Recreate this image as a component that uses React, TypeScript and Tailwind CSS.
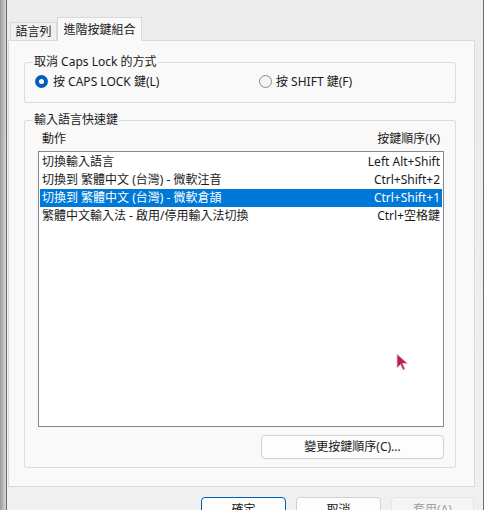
import React from "react";

const font = { fontFamily: '"Noto Sans", "Noto Sans CJK TC", sans-serif' };

function Radio({ checked }: { checked: boolean }) {
  return checked ? (
    <span className="w-[13px] h-[13px] rounded-full bg-[#005fb8] flex items-center justify-center shrink-0">
      <span className="w-[5px] h-[5px] rounded-full bg-white" />
    </span>
  ) : (
    <span className="w-[13px] h-[13px] rounded-full border border-[#8a8a8a] bg-[#f5f5f5] shrink-0" />
  );
}

const rows = [
  ["切換輸入語言", "Left Alt+Shift"],
  ["切換到 繁體中文 (台灣) - 微軟注音", "Ctrl+Shift+2"],
  ["切換到 繁體中文 (台灣) - 微軟倉頡", "Ctrl+Shift+1"],
  ["繁體中文輸入法 - 啟用/停用輸入法切換", "Ctrl+空格鍵"],
];

export default function App() {
  return (
    <div
      className="w-[484px] h-[510px] bg-[#f0f0f0] relative overflow-hidden flex text-[12px] text-[#1a1a1a]"
      style={font}
    >
      <div className="w-[7px] h-full shrink-0 bg-gradient-to-r from-[#9a9a9a] to-[#d8d8d8] border-r border-[#6a6a6a]" />
      <div className="flex-1 flex flex-col bg-gradient-to-b from-[#ececec] to-[#f0f0f0]">
        {/* tabs */}
        <div className="flex items-end pl-[3px] mt-[17px] h-[23px] shrink-0 relative z-10">
          <div className="w-[47px] h-[18px] border border-b-0 border-[#d9d9d9] bg-[#f0f0f0] flex items-center justify-center leading-none">
            語言列
          </div>
          <div className="w-[85px] h-[24px] border border-b-0 border-[#d9d9d9] bg-[#f9f9f9] flex items-start justify-center pt-[4px] leading-[16px] -mb-[1px]">
            進階按鍵組合
          </div>
        </div>
        {/* panel */}
        <div className="ml-[1px] w-[467px] h-[447px] shrink-0 border border-[#dadada] bg-[#f9f9f9] flex flex-col pl-[15px]">
          <fieldset className="mt-[13px] w-[432px] h-[49px] shrink-0 border border-[#dcdcdc] rounded-[2px] px-[10px]">
            <legend className="px-[1px] ml-[-2px] leading-[16px]">取消 Caps Lock 的方式</legend>
            <div className="flex items-center h-[21px] mt-[1px]">
              <div className="flex items-center gap-[5px] w-[224px]">
                <Radio checked />
                <span>按 CAPS LOCK 鍵(L)</span>
              </div>
              <div className="flex items-center gap-[4px]">
                <Radio checked={false} />
                <span>按 SHIFT 鍵(F)</span>
              </div>
            </div>
          </fieldset>
          <fieldset className="mt-[9px] w-[432px] h-[356px] shrink-0 border border-[#dcdcdc] rounded-[2px] pl-[13px] pr-[11px]">
            <legend className="px-[1px] ml-[-5px] leading-[16px]">輸入語言快速鍵</legend>
            <div className="flex justify-between h-[20px] items-center px-[4px] mt-[1px]">
              <span>動作</span>
              <span>按鍵順序(K)</span>
            </div>
            <div className="mt-[2px] h-[276px] border border-[#828790] bg-white p-[1px] pt-[1px]">
              {rows.map(([a, k], i) => (
                <div
                  key={i}
                  className={
                    "flex justify-between items-center h-[18px] px-[2px] " +
                    (i === 2 ? "bg-[#0078d7] text-white" : "")
                  }
                >
                  <span>{a}</span>
                  <span>{k}</span>
                </div>
              ))}
            </div>
            <div className="flex justify-end mt-[8px]">
              <button className="w-[183px] h-[24px] rounded-[4px] border border-[#d0d0d0] bg-[#fdfdfd] flex items-center justify-center">
                變更按鍵順序(C)...
              </button>
            </div>
          </fieldset>
        </div>
        {/* bottom buttons */}
        <div className="flex pl-[194px] gap-[10px] mt-[10px] shrink-0">
          <button className="w-[85px] h-[24px] rounded-[4px] border border-[#005fb8] bg-[#fdfdfd] flex items-start justify-center pt-[3px]">
            確定
          </button>
          <button className="w-[85px] h-[24px] rounded-[4px] border border-[#d0d0d0] bg-[#fdfdfd] flex items-start justify-center pt-[3px]">
            取消
          </button>
          <button className="w-[83px] h-[24px] rounded-[4px] border border-[#e5e5e5] bg-[#f5f5f5] text-[#a0a0a0] flex items-start justify-center pt-[3px]">
            套用(A)
          </button>
        </div>
      </div>
      <div className="w-[1px] h-full shrink-0 bg-[#6b6b6b]" />
      {/* cursor */}
      <svg className="absolute left-[396px] top-[353px]" width="14" height="20" viewBox="0 0 14 20">
        <path d="M1 1 L1 15 L4.5 11.5 L7 17 L9 16 L6.5 10.5 L11.5 10.5 Z" fill="#b8204e" stroke="#e8c0cc" strokeWidth="0.8" />
      </svg>
    </div>
  );
}
